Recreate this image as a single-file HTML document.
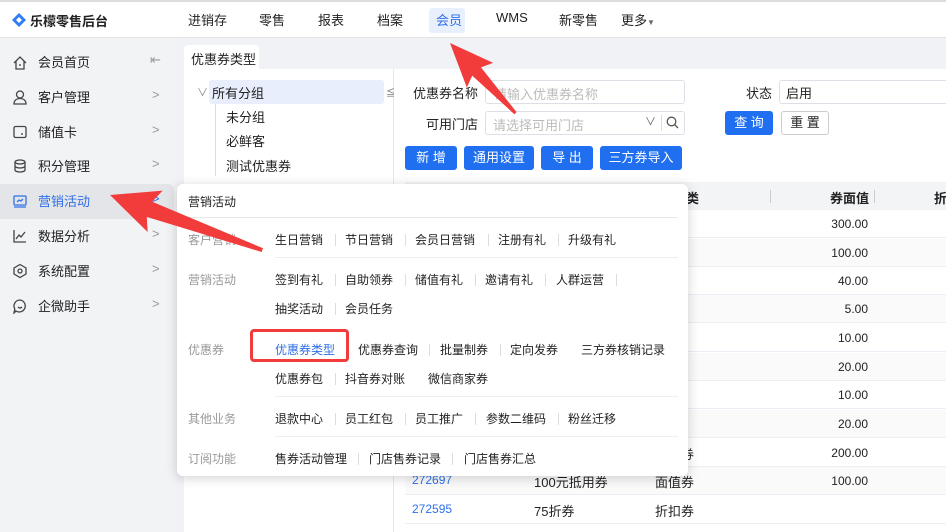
<!DOCTYPE html>
<html><head><meta charset="utf-8"><style>
*{margin:0;padding:0;box-sizing:border-box}
body{width:946px;height:532px;overflow:hidden;position:relative;background:#f0f2f5;font-family:"Liberation Sans","Noto Sans CJK SC",sans-serif;font-size:13px;color:#222}
.a{position:absolute;white-space:nowrap}
.top{left:0;top:0;width:946px;height:38px;background:#fff;border-top:2px solid #ddd;border-bottom:1px solid #e3e3e3}
.nav{top:10px;font-size:13px}
.side{left:0;top:38px;width:176px;height:494px;background:#f2f3f5}
.si{left:38px;font-size:13px}
.chev{left:152px;color:#999;font-size:13px}
.ic{left:12px;width:16px;height:16px}
.inp{background:#fff;border:1px solid #dcdfe6;border-radius:3px;height:24px}
.btn{background:#1f6ff0;color:#fff;border-radius:3px;height:24px;line-height:24px;text-align:center;font-size:13px}
.row{left:405px;width:541px;height:28px;border-bottom:1px solid #ebeef5;background:#fff}
.val{right:78px;font-size:12px}
.pop{left:177px;top:184px;width:511px;height:292px;background:#fff;border-radius:6px;box-shadow:0 2px 12px rgba(0,0,0,.18)}
.pl{left:11px;color:#999;font-size:12px}
.pi{font-size:12px;color:#222}
.sep{width:1px;height:12px;background:#ddd}
.hr{left:98px;width:403px;height:1px;background:#eee}
.lbl{text-align:right}
</style></head><body>
<div class="a top"></div>
<svg class="a" style="left:12px;top:13px" width="14" height="14" viewBox="0 0 14 14"><path d="M7 0L14 7 7 14 0 7Z" fill="#2f7cf6"/><path d="M7 4L10 7 7 10 4 7Z" fill="#fff"/></svg>
<div class="a" style="left:30px;top:11px;font-weight:bold;font-size:13px">乐檬零售后台</div>
<div class="a nav" style="left:188px">进销存</div>
<div class="a nav" style="left:259px">零售</div>
<div class="a nav" style="left:318px">报表</div>
<div class="a nav" style="left:377px">档案</div>
<div class="a" style="left:429px;top:8px;width:36px;height:25px;background:#e8f0fd;border-radius:3px"></div>
<div class="a nav" style="left:436px;color:#2f6fe8">会员</div>
<div class="a nav" style="left:496px">WMS</div>
<div class="a nav" style="left:559px">新零售</div>
<div class="a nav" style="left:621px">更多<span style="font-size:8px;color:#666">▼</span></div>

<div class="a side"></div>
<div class="a" style="left:0;top:184px;width:174px;height:35px;background:#e4e5e8;border-radius:0 6px 6px 0"></div>
<svg class="a ic" style="top:55px" viewBox="0 0 16 16" fill="none" stroke="#444" stroke-width="1.3"><path d="M2 8L8 2 14 8M4 6V14H12V6M8 9V11"/></svg>
<div class="a si" style="top:52px">会员首页</div><div class="a" style="left:150px;top:52px;color:#999">⇤</div>
<svg class="a ic" style="top:89px" viewBox="0 0 16 16" fill="none" stroke="#444" stroke-width="1.3"><circle cx="8" cy="5.5" r="3.5"/><path d="M2 15C2 11 5 9.5 8 9.5S14 11 14 15Z"/></svg>
<div class="a si" style="top:87px">客户管理</div><div class="a chev" style="top:87px">&gt;</div>
<svg class="a ic" style="top:124px" viewBox="0 0 16 16" fill="none" stroke="#444" stroke-width="1.3"><rect x="2" y="2.5" width="12" height="11" rx="1.5"/><path d="M9 10H11"/></svg>
<div class="a si" style="top:122px">储值卡</div><div class="a chev" style="top:122px">&gt;</div>
<svg class="a ic" style="top:158px" viewBox="0 0 16 16" fill="none" stroke="#444" stroke-width="1.3"><ellipse cx="8" cy="4" rx="5" ry="2"/><path d="M3 4V12C3 13 5 14 8 14S13 13 13 12V4M3 8C3 9 5 10 8 10S13 9 13 8"/></svg>
<div class="a si" style="top:156px">积分管理</div><div class="a chev" style="top:156px">&gt;</div>
<svg class="a ic" style="top:193px" viewBox="0 0 16 16" fill="none" stroke="#2f6fe8" stroke-width="1.3"><rect x="2" y="3" width="12" height="9" rx="1"/><path d="M2 14H14M5 9L7 7 9 8 11 6"/></svg>
<div class="a si" style="top:191px;color:#2f6fe8">营销活动</div><div class="a chev" style="top:191px;color:#2f6fe8">&gt;</div>
<svg class="a ic" style="top:228px" viewBox="0 0 16 16" fill="none" stroke="#444" stroke-width="1.3"><path d="M2 2V14H14M4 11L7 7 9 9 13 4"/></svg>
<div class="a si" style="top:226px">数据分析</div><div class="a chev" style="top:226px">&gt;</div>
<svg class="a ic" style="top:263px" viewBox="0 0 16 16" fill="none" stroke="#444" stroke-width="1.3"><path d="M8 1.5L14 5V11L8 14.5 2 11V5Z"/><circle cx="8" cy="8" r="2"/></svg>
<div class="a si" style="top:261px">系统配置</div><div class="a chev" style="top:261px">&gt;</div>
<svg class="a ic" style="top:298px" viewBox="0 0 16 16" fill="none" stroke="#444" stroke-width="1.3"><path d="M8 2A6 6 0 1 1 4 13L2 15 2.8 11A6 6 0 0 1 8 2Z"/><path d="M6 9Q8 11 10 9"/></svg>
<div class="a si" style="top:296px">企微助手</div><div class="a chev" style="top:296px">&gt;</div>

<div class="a" style="left:184px;top:45px;width:75px;height:25px;background:#fff;border-radius:4px 4px 0 0"></div>
<div class="a" style="left:191px;top:49px">优惠券类型</div>
<div class="a" style="left:184px;top:69px;width:762px;height:463px;background:#fff"></div>
<div class="a" style="left:393px;top:69px;width:1px;height:463px;background:#e8e8e8"></div>
<div class="a" style="left:209px;top:80px;width:175px;height:24px;background:#e8eefb;border-radius:3px"></div>
<div class="a" style="left:197px;top:84px;color:#888;font-size:11px">∨</div>
<div class="a" style="left:212px;top:83px">所有分组</div>
<div class="a" style="left:386px;top:86px;font-size:9px;color:#666">≦</div>
<div class="a" style="left:215px;top:104px;width:1px;height:72px;background:#ddd"></div>
<div class="a" style="left:226px;top:107px">未分组</div>
<div class="a" style="left:226px;top:131px">必鲜客</div>
<div class="a" style="left:226px;top:156px">测试优惠券</div>

<div class="a lbl" style="left:388px;width:90px;top:83px">优惠券名称</div>
<div class="a inp" style="left:485px;top:80px;width:200px"></div>
<div class="a" style="left:494px;top:84px;color:#bbb">请输入优惠券名称</div>
<div class="a lbl" style="left:720px;width:52px;top:83px">状态</div>
<div class="a inp" style="left:779px;top:80px;width:180px"></div>
<div class="a" style="left:786px;top:83px">启用</div>
<div class="a lbl" style="left:388px;width:90px;top:114px">可用门店</div>
<div class="a inp" style="left:485px;top:111px;width:200px"></div>
<div class="a" style="left:493px;top:115px;color:#bbb">请选择可用门店</div>
<div class="a" style="left:645px;top:113px;color:#666;font-size:11px">∨</div>
<div class="a" style="left:661px;top:115px;width:1px;height:16px;background:#ddd"></div>
<svg class="a" style="left:666px;top:116px" width="13" height="13" viewBox="0 0 13 13" fill="none" stroke="#555" stroke-width="1.3"><circle cx="5.5" cy="5.5" r="4.3"/><path d="M8.7 8.7L12 12"/></svg>
<div class="a btn" style="left:725px;top:111px;width:48px">查 询</div>
<div class="a" style="left:781px;top:111px;width:48px;height:24px;border:1px solid #ccc;border-radius:3px;background:#fff;text-align:center;line-height:22px">重 置</div>
<div class="a btn" style="left:405px;top:146px;width:52px">新 增</div>
<div class="a btn" style="left:464px;top:146px;width:70px">通用设置</div>
<div class="a btn" style="left:541px;top:146px;width:52px">导 出</div>
<div class="a btn" style="left:600px;top:146px;width:82px">三方券导入</div>

<div class="a" style="left:405px;top:182px;width:541px;height:29px;background:#f3f4f6"></div>
<div class="a" style="left:660px;top:188px;font-weight:bold">券种类</div>
<div class="a" style="left:770px;top:190px;width:1px;height:13px;background:#ccc"></div>
<div class="a" style="left:830px;top:188px;font-weight:bold">券面值</div>
<div class="a" style="left:874px;top:190px;width:1px;height:13px;background:#ccc"></div>
<div class="a" style="left:934px;top:188px;font-weight:bold">折</div>

<div class="a row" style="top:210px"><span class="a val" style="top:7px">300.00</span></div>
<div class="a row" style="top:239px;background:#fafafa"><span class="a val" style="top:7px">100.00</span></div>
<div class="a row" style="top:267px"><span class="a val" style="top:7px">40.00</span></div>
<div class="a row" style="top:295px;background:#fafafa"><span class="a val" style="top:7px">5.00</span></div>
<div class="a row" style="top:324px"><span class="a val" style="top:7px">10.00</span></div>
<div class="a row" style="top:353px;background:#fafafa"><span class="a val" style="top:7px">20.00</span></div>
<div class="a row" style="top:381px"><span class="a val" style="top:7px">10.00</span></div>
<div class="a row" style="top:410px;background:#fafafa"><span class="a val" style="top:7px">20.00</span></div>
<div class="a row" style="top:439px"><span class="a" style="left:250px;top:5px">面值券</span><span class="a val" style="top:7px">200.00</span></div>
<div class="a row" style="top:467px;background:#fafafa"><span class="a" style="left:7px;top:6px;color:#2f6fe8;font-size:12px">272697</span><span class="a" style="left:129px;top:5px">100元抵用券</span><span class="a" style="left:250px;top:5px">面值券</span><span class="a val" style="top:7px">100.00</span></div>
<div class="a row" style="top:496px"><span class="a" style="left:7px;top:6px;color:#2f6fe8;font-size:12px">272595</span><span class="a" style="left:129px;top:5px">75折券</span><span class="a" style="left:250px;top:5px">折扣券</span></div>

<div class="a pop">
<div class="a" style="left:11px;top:9px;font-size:12px">营销活动</div>
<div class="a" style="left:11px;top:33px;width:490px;height:1px;background:#e8e8e8"></div>
<div class="a pl" style="top:47px">客户营销</div>
<div class="a pi" style="left:98px;top:47px">生日营销</div><div class="a sep" style="left:158px;top:50px"></div>
<div class="a pi" style="left:168px;top:47px">节日营销</div><div class="a sep" style="left:228px;top:50px"></div>
<div class="a pi" style="left:238px;top:47px">会员日营销</div><div class="a sep" style="left:311px;top:50px"></div>
<div class="a pi" style="left:321px;top:47px">注册有礼</div><div class="a sep" style="left:381px;top:50px"></div>
<div class="a pi" style="left:391px;top:47px">升级有礼</div>
<div class="a hr" style="top:73px"></div>
<div class="a pl" style="top:87px">营销活动</div>
<div class="a pi" style="left:98px;top:87px">签到有礼</div><div class="a sep" style="left:158px;top:90px"></div>
<div class="a pi" style="left:168px;top:87px">自助领券</div><div class="a sep" style="left:228px;top:90px"></div>
<div class="a pi" style="left:238px;top:87px">储值有礼</div><div class="a sep" style="left:298px;top:90px"></div>
<div class="a pi" style="left:308px;top:87px">邀请有礼</div><div class="a sep" style="left:368px;top:90px"></div>
<div class="a pi" style="left:379px;top:87px">人群运营</div><div class="a sep" style="left:439px;top:90px"></div>
<div class="a pi" style="left:98px;top:116px">抽奖活动</div><div class="a sep" style="left:158px;top:119px"></div>
<div class="a pi" style="left:168px;top:116px">会员任务</div>
<div class="a pl" style="top:157px">优惠券</div>
<div class="a" style="left:73px;top:145px;width:99px;height:33px;border:3px solid #f23c3c;border-radius:4px"></div>
<div class="a pi" style="left:98px;top:157px;color:#2f6fe8">优惠券类型</div>
<div class="a pi" style="left:181px;top:157px">优惠券查询</div><div class="a sep" style="left:252px;top:160px"></div>
<div class="a pi" style="left:263px;top:157px">批量制券</div><div class="a sep" style="left:323px;top:160px"></div>
<div class="a pi" style="left:333px;top:157px">定向发券</div>
<div class="a pi" style="left:404px;top:157px">三方券核销记录</div>
<div class="a pi" style="left:98px;top:186px">优惠券包</div><div class="a sep" style="left:158px;top:189px"></div>
<div class="a pi" style="left:168px;top:186px">抖音券对账</div>
<div class="a pi" style="left:251px;top:186px">微信商家券</div>
<div class="a hr" style="top:212px"></div>
<div class="a pl" style="top:226px">其他业务</div>
<div class="a pi" style="left:98px;top:226px">退款中心</div><div class="a sep" style="left:158px;top:229px"></div>
<div class="a pi" style="left:168px;top:226px">员工红包</div><div class="a sep" style="left:228px;top:229px"></div>
<div class="a pi" style="left:238px;top:226px">员工推广</div><div class="a sep" style="left:298px;top:229px"></div>
<div class="a pi" style="left:309px;top:226px">参数二维码</div><div class="a sep" style="left:381px;top:229px"></div>
<div class="a pi" style="left:391px;top:226px">粉丝迁移</div>
<div class="a hr" style="top:252px"></div>
<div class="a pl" style="top:266px">订阅功能</div>
<div class="a pi" style="left:98px;top:266px">售券活动管理</div><div class="a sep" style="left:181px;top:269px"></div>
<div class="a pi" style="left:192px;top:266px">门店售券记录</div><div class="a sep" style="left:275px;top:269px"></div>
<div class="a pi" style="left:287px;top:266px">门店售券汇总</div>
</div>

<svg class="a" style="left:0;top:0" width="946" height="532">
<g fill="#f23c3c">
<polygon transform="translate(110,195) rotate(19.9)" points="0,0 48,-22 42,-8 162,-2 162,2 42,8 48,22"/>
<polygon transform="translate(450,43) rotate(47)" points="0,0 44,-18 39,-6 96,-1.5 96,1.5 39,6 44,18"/>
</g>
</svg>
</body></html>
